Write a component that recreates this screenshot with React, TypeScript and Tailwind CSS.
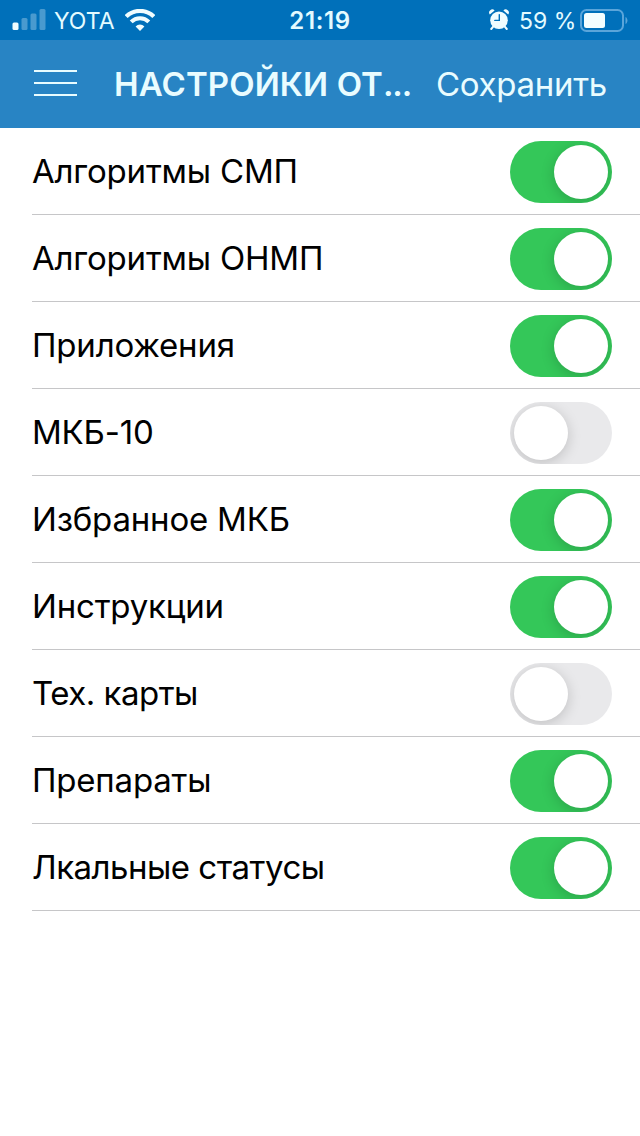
import { useState } from "react";
import clsx from "clsx";

const initialSections = [
  { name: "Алгоритмы СМП", enabled: true },
  { name: "Алгоритмы ОНМП", enabled: true },
  { name: "Приложения", enabled: true },
  { name: "МКБ-10", enabled: false },
  { name: "Избранное МКБ", enabled: true },
  { name: "Инструкции", enabled: true },
  { name: "Тех. карты", enabled: false, tight: true },
  { name: "Препараты", enabled: true },
  { name: "Лкальные статусы", enabled: true, tight: true },
];

const SignalIcon = () => (
  <svg width="34" height="22" viewBox="0 0 34 22" fill="#f0fdff">
    <rect x="0.5" y="13.5" width="6" height="7.5" rx="1.5" />
    <g opacity="0.3">
      <rect x="9.5" y="9" width="6" height="12" rx="1.5" />
      <rect x="18.5" y="4.5" width="6" height="16.5" rx="1.5" />
      <rect x="27.5" y="0" width="6" height="21" rx="1.5" />
    </g>
  </svg>
);

const WifiIcon = () => (
  <svg width="30" height="22" viewBox="0 0 30 22" fill="none" stroke="#f0fdff">
    <path d="M1.2 7.6a19.6 19.6 0 0 1 27.6 0" strokeWidth="4.2" />
    <path d="M6.2 12.9a12.4 12.4 0 0 1 17.6 0" strokeWidth="4" />
    <path
      d="M15 22l-4.4-4.6a6.2 6.2 0 0 1 8.8 0z"
      fill="#f0fdff"
      stroke="none"
    />
  </svg>
);

const AlarmIcon = () => (
  <svg width="20" height="22" viewBox="0 0 20 22" fill="#f0fdff">
    <path d="M0.8 5.6A3.2 3.2 0 0 1 5.6 1.4z" />
    <path d="M19.2 5.6A3.2 3.2 0 0 0 14.4 1.4z" />
    <circle cx="10" cy="11.2" r="8.8" />
    <path
      d="M4.2 17.6l-2 2.4M15.8 17.6l2 2.4"
      stroke="#f0fdff"
      strokeWidth="2"
      strokeLinecap="round"
    />
    <path
      d="M10.3 5.6v5.8H5.8"
      fill="none"
      stroke="#0070ba"
      strokeWidth="1.4"
      strokeLinecap="round"
    />
  </svg>
);

const BatteryIcon = () => (
  <svg width="48" height="23" viewBox="0 0 48 23" fill="none">
    <rect
      x="1"
      y="1"
      width="42"
      height="21"
      rx="5.5"
      stroke="#5aa5da"
      strokeWidth="2"
    />
    <rect x="4" y="4" width="21" height="15" rx="2.5" fill="#f4feff" />
    <path d="M45.5 8c2.6 1.2 2.6 5.8 0 7z" fill="#5aa5da" />
  </svg>
);

const StatusBar = () => (
  <div className="grid h-10 grid-cols-3 items-center bg-[#0070ba] text-[23px] text-[#e4fbff]">
    <div className="flex items-center pl-3">
      <SignalIcon />
      <span className="ml-2 w-[61px] pt-0.5 whitespace-nowrap">YOTA</span>
      <span className="ml-2.5">
        <WifiIcon />
      </span>
    </div>
    <span className="pt-0.5 text-center text-2xl font-semibold tracking-[0.6px]">
      21:19
    </span>
    <div className="flex items-center justify-end pr-3">
      <AlarmIcon />
      <span className="mr-1.5 ml-2.5 w-[55px] pt-0.5 whitespace-nowrap">
        59 %
      </span>
      <BatteryIcon />
    </div>
  </div>
);

const Header = () => (
  <header className="flex h-[88px] items-center bg-[#2884c4] pl-[34px] text-[33px] text-[#e9fcff]">
    <button
      className="flex w-[43px] flex-col gap-[10px] pb-0.5"
      aria-label="Меню"
    >
      <span className="h-0.5 bg-[#e9fcff]" />
      <span className="h-0.5 bg-[#e9fcff]" />
      <span className="h-0.5 bg-[#e9fcff]" />
    </button>
    <h1 className="ml-[37px] w-[322px] pt-0.5 font-semibold tracking-[0.1px] whitespace-nowrap">
      НАСТРОЙКИ ОТ<span className="tracking-[-1.2px]">...</span>
    </h1>
    <button className="pt-0.5 tracking-[-0.3px] whitespace-nowrap">
      Сохранить
    </button>
  </header>
);

interface SwitchProps {
  checked: boolean;
  label: string;
  onChange: () => void;
}

const Switch = ({ checked, label, onChange }: SwitchProps) => (
  <button
    role="switch"
    aria-checked={checked}
    aria-label={label}
    onClick={onChange}
    className={clsx(
      "flex h-[62px] w-[102px] items-center overflow-hidden rounded-full px-1",
      checked ? "justify-end bg-[#34c759]" : "justify-start bg-[#e9e9eb]"
    )}
  >
    <span className="size-[54px] rounded-full bg-white shadow-[0_3px_14px_rgba(0,0,0,0.18)]" />
  </button>
);

export default function App() {
  const [sections, setSections] = useState(initialSections);

  const handlerToggle = (index: number) => {
    setSections(
      sections.map((section, i) =>
        i === index ? { ...section, enabled: !section.enabled } : section
      )
    );
  };

  return (
    <div className="min-h-screen bg-white font-[Inter,'Liberation_Sans',sans-serif]">
      <StatusBar />
      <Header />
      <ul className="pl-8">
        {sections.map((section, i) => (
          <li
            key={section.name}
            className="flex h-[87px] items-center justify-between border-b border-[#c6c6c8] pt-px pr-7"
          >
            <span
              className={clsx(
                "text-[33px] whitespace-nowrap text-black",
                section.tight ? "tracking-[-0.5px]" : "tracking-[-0.2px]"
              )}
            >
              {section.name}
            </span>
            <Switch
              checked={section.enabled}
              label={section.name}
              onChange={() => handlerToggle(i)}
            />
          </li>
        ))}
      </ul>
    </div>
  );
}
